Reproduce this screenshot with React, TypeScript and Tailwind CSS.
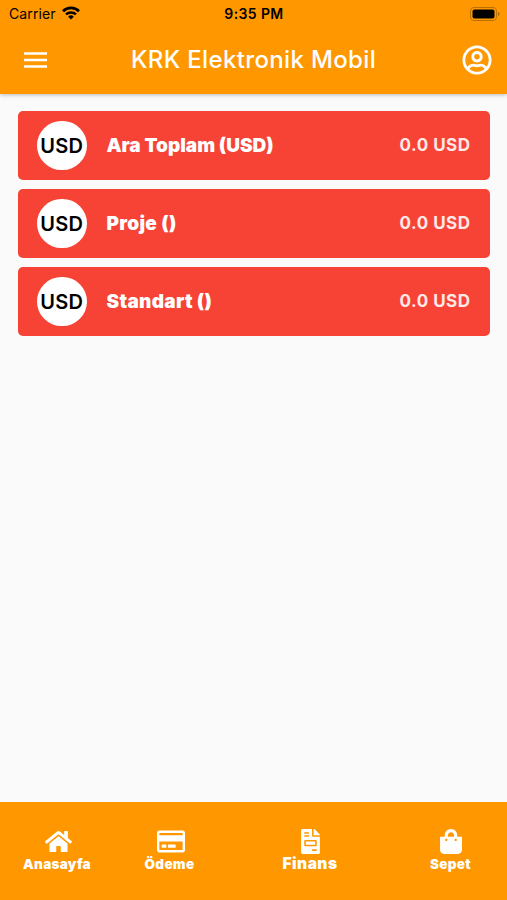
import type { ReactNode } from "react";
import {
  FaFileInvoice,
  FaHome,
  FaRegCreditCard,
  FaRegUserCircle,
  FaShoppingBag,
} from "react-icons/fa";

const totals = [
  { title: "Ara Toplam (USD)", amount: "0.0 USD", classes: "tracking-[0px]" },
  { title: "Proje ()", amount: "0.0 USD", classes: "tracking-[0.3px]" },
  { title: "Standart ()", amount: "0.0 USD", classes: "tracking-[0.3px]" },
];

function StatusBar() {
  return (
    <div className="grid h-7 grid-cols-3 items-center pr-[7px] pl-[9px] text-black">
      <div className="flex items-center gap-[6px]">
        <span className="text-[14px] leading-none tracking-[0.1px]">Carrier</span>
        <svg className="mb-[2px] h-[14px] w-[18px]" viewBox="0 0 18 14" fill="none">
          <path d="M1 5.2a11.5 11.5 0 0 1 16 0" stroke="currentColor" strokeWidth="2.8" />
          <path d="M4 8.4a7.2 7.2 0 0 1 10 0" stroke="currentColor" strokeWidth="2.5" />
          <path d="M9 13.6 6.1 10.7a4.1 4.1 0 0 1 5.8 0Z" fill="currentColor" />
        </svg>
      </div>
      <span className="pr-px text-center text-[14px] leading-none font-semibold tracking-[0.4px] whitespace-nowrap">
        9:35 PM
      </span>
      <svg className="mb-px h-[14px] w-[31px] justify-self-end" viewBox="0 0 31 14">
        <rect x="1.500" y="0.5" width="26" height="13" rx="3.5" fill="none" stroke="#b87000" />
        <rect x="3.500" y="2.5" width="22" height="9" rx="2" fill="currentColor" />
        <path d="M29 5v4c2-.7 2-3.300 0-4Z" fill="#a76400" />
      </svg>
    </div>
  );
}

function TotalCard({ title, amount, classes }: { title: string; amount: string; classes: string }) {
  return (
    <div className="flex h-[68.5px] items-center rounded-[5px] bg-[#f64336] pr-[19.5px] pl-[19px] text-white">
      <div className="flex size-[49.5px] shrink-0 items-center justify-center rounded-full bg-white pt-px text-[20px] font-semibold tracking-[0.2px] text-black">
        USD
      </div>
      <p className={`ml-5 flex-1 pt-[2px] text-[19px] font-black whitespace-nowrap ${classes}`}>
        {title}
      </p>
      <p className="pt-px text-[17px] font-bold tracking-[0.5px] text-[#ffe9e6]">{amount}</p>
    </div>
  );
}

function NavItem({ icon, label, classes }: { icon: ReactNode; label: string; classes: string }) {
  return (
    <div className="flex cursor-pointer flex-col items-center select-none">
      <div className="flex h-[25px] items-center">{icon}</div>
      <p className={`mt-[2px] h-4 leading-4 font-black whitespace-nowrap ${classes}`}>{label}</p>
    </div>
  );
}

function App() {
  return (
    <div className="flex h-[900px] w-full flex-col overflow-hidden bg-[#fafafa] font-['Inter','Liberation_Sans',sans-serif]">
      <header className="z-10 h-[94px] shrink-0 bg-[#ff9800] shadow-[0_1px_4px_rgba(0,0,0,0.25)]">
        <StatusBar />
        <div className="flex h-[63px] items-center justify-between pr-[15px] pl-6 text-white">
          <svg className="h-4 w-[23px]" viewBox="0 0 23 16" stroke="currentColor" strokeWidth="2.4">
            <path d="M0 1.500h23M0 8h23M0 14.500h23" />
          </svg>
          <h1 className="pt-px pr-0.5 text-[24px] leading-none font-medium tracking-[0.35px] whitespace-nowrap">
            KRK Elektronik Mobil
          </h1>
          <FaRegUserCircle className="size-[30px]" />
        </div>
      </header>

      <main className="flex flex-1 flex-col gap-[9.5px] pt-[17px] pr-[17px] pl-[18px]">
        {totals.map((total) => (
          <TotalCard key={total.title} {...total} />
        ))}
      </main>

      <nav className="grid h-[98px] shrink-0 grid-cols-[114px_111px_170px_111px] items-start bg-[#ff9800] pt-[27px] text-white">
        <NavItem
          icon={<FaHome className="ml-[3px] h-[25px] w-[27px]" />}
          label="Anasayfa"
          classes="text-[13.5px] tracking-[0.3px]"
        />
        <NavItem
          icon={<FaRegCreditCard className="ml-[3px] h-[25px] w-[28px]" />}
          label="Ödeme"
          classes="text-[13.5px] tracking-[0.3px]"
        />
        <NavItem
          icon={<FaFileInvoice className="h-[25px] w-[19px]" />}
          label="Finans"
          classes="text-[15.5px] tracking-[0.5px]"
        />
        <NavItem
          icon={<FaShoppingBag className="h-[25px] w-[22px]" />}
          label="Sepet"
          classes="text-[13.5px] tracking-[0.3px]"
        />
      </nav>
    </div>
  );
}

export default App;
